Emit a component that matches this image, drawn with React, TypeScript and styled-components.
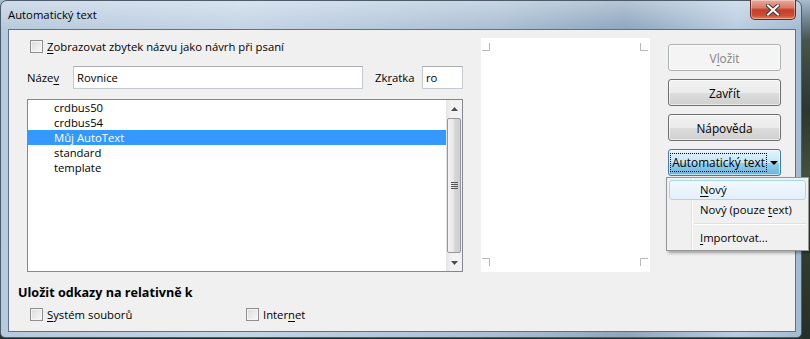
import React from "react";
import styled, { createGlobalStyle } from "styled-components";

const GlobalStyle = createGlobalStyle`
  html, body { margin: 0; padding: 0; }
  body {
    width: 810px;
    height: 339px;
    overflow: hidden;
    background: linear-gradient(180deg, #a7bccf 0px, #7b8ea0 16px, #46554d 40px, #2b3630 110px, #4a5744 190px, #2f3a32 260px, #26302a 339px);
    font-family: "Segoe UI", "Open Sans", sans-serif;
    font-size: 11.3px;
    color: #000;
  }
`;

const Page = styled.div`
  position: relative;
  width: 810px;
  height: 339px;
`;

const Frame = styled.div`
  width: 802px;
  height: 338px;
  box-sizing: border-box;
  border: 1px solid #4b5c6d;
  border-radius: 7px 7px 5px 5px;
  padding: 0 5px 5px 7px;
  display: flex;
  flex-direction: column;
  background:
    linear-gradient(180deg, rgba(255, 255, 255, 0.35), rgba(255, 255, 255, 0) 28px),
    linear-gradient(90deg, #b7cadd 0%, #c3d4e5 30%, #aabfd4 62%, #8ea6be 78%, #b9cde1 92%, #a3bbd2 100%);
`;

const TitleBar = styled.div`
  height: 28px;
  display: flex;
  align-items: flex-start;
`;

const Title = styled.div`
  padding: 6px 0 0 0;
  line-height: 15px;
  color: #000;
`;

const CloseButton = styled.div`
  margin: -1px 0 0 auto;
  width: 46px;
  height: 20px;
  box-sizing: border-box;
  border: 1px solid #6a2a22;
  border-top: none;
  border-radius: 0 0 5px 5px;
  background: linear-gradient(180deg, #e9a99b 0%, #dc7a68 40%, #c1402e 52%, #cc4b33 80%, #e67f5b 100%);
  box-shadow: inset 0 0 0 1px rgba(255, 255, 255, 0.35);
  display: flex;
  align-items: center;
  justify-content: center;
`;

const Client = styled.div`
  flex: 1;
  box-sizing: border-box;
  border: 1px solid #5e7186;
  background: #f0f0f0;
  display: flex;
  flex-direction: column;
  padding-top: 8px;
`;

const TopRow = styled.div`
  display: flex;
  align-items: flex-start;
  padding-left: 18px;
  gap: 18px;
`;

const LeftCol = styled.div`
  width: 436px;
  display: flex;
  flex-direction: column;
`;

const CheckRow = styled.label<{ $indent?: number }>`
  display: flex;
  align-items: center;
  height: 15px;
  padding-left: ${(p) => p.$indent ?? 0}px;
  gap: 4px;
  white-space: nowrap;
`;

const CheckBox = styled.span`
  width: 13px;
  height: 13px;
  box-sizing: border-box;
  border: 1px solid #8e8f8f;
  background: linear-gradient(135deg, #dadada 0%, #ececec 55%, #fafafa 100%);
  box-shadow: inset 0 0 0 1px #f4f4f4;
  flex: none;
`;

const Key = styled.span`
  text-decoration: underline;
  text-underline-offset: 2px;
`;

const NameRow = styled.div`
  display: flex;
  align-items: center;
  height: 23px;
  margin-top: 12px;
`;

const FieldLabel = styled.span<{ $w: number; $ml?: number }>`
  width: ${(p) => p.$w}px;
  margin-left: ${(p) => p.$ml ?? 0}px;
  flex: none;
`;

const TextInput = styled.div<{ $w: number }>`
  width: ${(p) => p.$w}px;
  height: 23px;
  box-sizing: border-box;
  border: 1px solid #c5cad2;
  border-top-color: #abadb3;
  background: #fff;
  padding: 3px 0 0 3px;
  line-height: 15px;
  flex: none;
`;

const ListBox = styled.div`
  margin-top: 10px;
  height: 173px;
  box-sizing: border-box;
  border: 1px solid #828790;
  background: #fff;
  display: flex;
`;

const Items = styled.div`
  flex: 1;
  display: flex;
  flex-direction: column;
`;

const Item = styled.div<{ $sel?: boolean }>`
  height: 15px;
  line-height: 15px;
  padding-left: 26px;
  color: ${(p) => (p.$sel ? "#fff" : "#000")};
  background: ${(p) => (p.$sel ? "#3399ff" : "transparent")};
`;

const ScrollBar = styled.div`
  width: 16px;
  display: flex;
  flex-direction: column;
  background: linear-gradient(90deg, #e3e3e3, #f2f2f2 30%, #f2f2f2);
`;

const Arrow = styled.div`
  height: 17px;
  display: flex;
  align-items: center;
  justify-content: center;
  flex: none;
`;

const Thumb = styled.div`
  flex: 1;
  margin: 1px;
  box-sizing: border-box;
  border: 1px solid #979797;
  border-radius: 2px;
  background: linear-gradient(90deg, #f3f3f3 0%, #e8e8e8 45%, #d6d6d6 55%, #cfcfcf 100%);
  display: flex;
  align-items: center;
  justify-content: center;
`;

const Preview = styled.div`
  width: 169px;
  height: 234px;
  background: #fff;
  flex: none;
`;

const ButtonCol = styled.div`
  width: 113px;
  padding-top: 6px;
  display: flex;
  flex-direction: column;
  gap: 8px;
`;

const Button = styled.div<{ $disabled?: boolean; $active?: boolean }>`
  height: 27px;
  box-sizing: border-box;
  border: 1px solid ${(p) => (p.$disabled ? "#adb2b5" : p.$active ? "#3c7fb1" : "#707070")};
  border-radius: 3px;
  display: flex;
  align-items: center;
  justify-content: center;
  font-size: 11.8px;
  color: ${(p) => (p.$disabled ? "#838383" : "#000")};
  background: ${(p) =>
    p.$disabled
      ? "#f4f4f4"
      : p.$active
      ? "linear-gradient(180deg, #e5f4fc 0%, #c4e5f6 50%, #98d1ef 51%, #68b3db 100%)"
      : "linear-gradient(180deg, #f2f2f2 0%, #ebebeb 50%, #dddddd 51%, #cfcfcf 100%)"};
  box-shadow: inset 0 0 0 1px rgba(255, 255, 255, 0.6);
`;

const Focus = styled.span`
  outline: 1px dotted #000;
  padding: 1px 1px;
  line-height: 15px;
`;

const DropArrow = styled.span`
  margin-left: 4px;
  width: 0;
  height: 0;
  border-left: 4px solid transparent;
  border-right: 4px solid transparent;
  border-top: 4px solid #000;
`;

const Bottom = styled.div`
  padding: 13px 0 0 9px;
  display: flex;
  flex-direction: column;
`;

const GroupLabel = styled.div`
  font-weight: bold;
  font-size: 12.6px;
  line-height: 15px;
  height: 15px;
`;

const BottomChecks = styled.div`
  display: flex;
  margin-top: 7px;
  padding-left: 12px;
`;

const CheckSlot = styled.div<{ $w: number }>`
  width: ${(p) => p.$w}px;
`;

const Menu = styled.div`
  position: absolute;
  left: 666px;
  top: 177px;
  width: 143px;
  height: 74px;
  box-sizing: border-box;
  border: 1px solid #979797;
  background:
    linear-gradient(90deg, transparent 24px, #e2e3e3 24px, #e2e3e3 25px, #fff 25px, #fff 26px, transparent 26px),
    #f0f0f0;
  box-shadow: 2px 2px 3px rgba(0, 0, 0, 0.35);
  padding: 2px;
  display: flex;
  flex-direction: column;
`;

const MenuItem = styled.div<{ $hot?: boolean }>`
  height: 20px;
  box-sizing: border-box;
  line-height: 18px;
  padding-left: 30px;
  border: 1px solid ${(p) => (p.$hot ? "#a8d8eb" : "transparent")};
  border-radius: 3px;
  background: ${(p) => (p.$hot ? "linear-gradient(180deg, #f2f8fd 0%, #e3effb 100%)" : "transparent")};
  white-space: nowrap;
`;

const MenuSep = styled.div`
  height: 9px;
  margin-left: 25px;
  display: flex;
  align-items: center;
  &::after {
    content: "";
    flex: 1;
    height: 1px;
    background: #e0e0e0;
    border-bottom: 1px solid #fff;
  }
`;

const items = ["crdbus50", "crdbus54", "Můj AutoText", "standard", "template"];

const CornerMarks = () => (
  <svg width="169" height="234" style={{ display: "block" }}>
    <path
      d="M8.5 5 V12.5 H1 M159.5 5 V12.5 H167 M1 220.5 H8.5 V228 M167 220.5 H159.5 V228"
      fill="none"
      stroke="#b8b8b8"
      strokeWidth="1"
    />
  </svg>
);

const App: React.FC = () => {
  return (
    <Page>
      <GlobalStyle />
      <Frame>
        <TitleBar>
          <Title>Automatický text</Title>
          <CloseButton>
            <svg width="14" height="12" viewBox="0 0 14 12">
              <path
                d="M2 1.5 L12 10.5 M12 1.5 L2 10.5"
                stroke="#3b3b3b"
                strokeWidth="4"
                strokeLinecap="square"
              />
              <path
                d="M2 1.5 L12 10.5 M12 1.5 L2 10.5"
                stroke="#fff"
                strokeWidth="2"
                strokeLinecap="square"
              />
            </svg>
          </CloseButton>
        </TitleBar>
        <Client>
          <TopRow>
            <LeftCol>
              <CheckRow $indent={3} style={{ marginTop: 1 }}>
                <CheckBox />
                <span>
                  <Key>Z</Key>obrazovat zbytek názvu jako návrh při psaní
                </span>
              </CheckRow>
              <NameRow>
                <FieldLabel $w={46}>
                  Náze<Key>v</Key>
                </FieldLabel>
                <TextInput $w={290}>Rovnice</TextInput>
                <FieldLabel $w={47} $ml={12}>
                  Zk<Key>r</Key>atka
                </FieldLabel>
                <TextInput $w={41}>ro</TextInput>
              </NameRow>
              <ListBox>
                <Items>
                  {items.map((it, i) => (
                    <Item key={it} $sel={i === 2}>
                      {it}
                    </Item>
                  ))}
                </Items>
                <ScrollBar>
                  <Arrow>
                    <svg width="7" height="4">
                      <path d="M0 4 L3.5 0 L7 4 Z" fill="#4d4d4d" />
                    </svg>
                  </Arrow>
                  <Thumb>
                    <svg width="7" height="7">
                      <path d="M0 0.5 H7 M0 2.5 H7 M0 4.5 H7 M0 6.5 H7" stroke="#555" strokeWidth="1" />
                    </svg>
                  </Thumb>
                  <Arrow>
                    <svg width="7" height="4">
                      <path d="M0 0 L7 0 L3.5 4 Z" fill="#4d4d4d" />
                    </svg>
                  </Arrow>
                </ScrollBar>
              </ListBox>
            </LeftCol>
            <Preview>
              <CornerMarks />
            </Preview>
            <ButtonCol>
              <Button $disabled>
                <span>
                  V<Key>l</Key>ožit
                </span>
              </Button>
              <Button>Zavřít</Button>
              <Button>Nápověda</Button>
              <Button $active>
                <Focus>Automatický text</Focus>
                <DropArrow />
              </Button>
            </ButtonCol>
          </TopRow>
          <Bottom>
            <GroupLabel>Uložit odkazy na relativně k</GroupLabel>
            <BottomChecks>
              <CheckSlot $w={216}>
                <CheckRow>
                  <CheckBox />
                  <span>
                    <Key>S</Key>ystém souborů
                  </span>
                </CheckRow>
              </CheckSlot>
              <CheckSlot $w={120}>
                <CheckRow>
                  <CheckBox />
                  <span>
                    Inter<Key>n</Key>et
                  </span>
                </CheckRow>
              </CheckSlot>
            </BottomChecks>
          </Bottom>
        </Client>
      </Frame>
      <Menu>
        <MenuItem $hot>
          <Key>N</Key>ový
        </MenuItem>
        <MenuItem>
          Nový (pouze <Key>t</Key>ext)
        </MenuItem>
        <MenuSep />
        <MenuItem>
          <Key>I</Key>mportovat...
        </MenuItem>
      </Menu>
    </Page>
  );
};

export default App;
